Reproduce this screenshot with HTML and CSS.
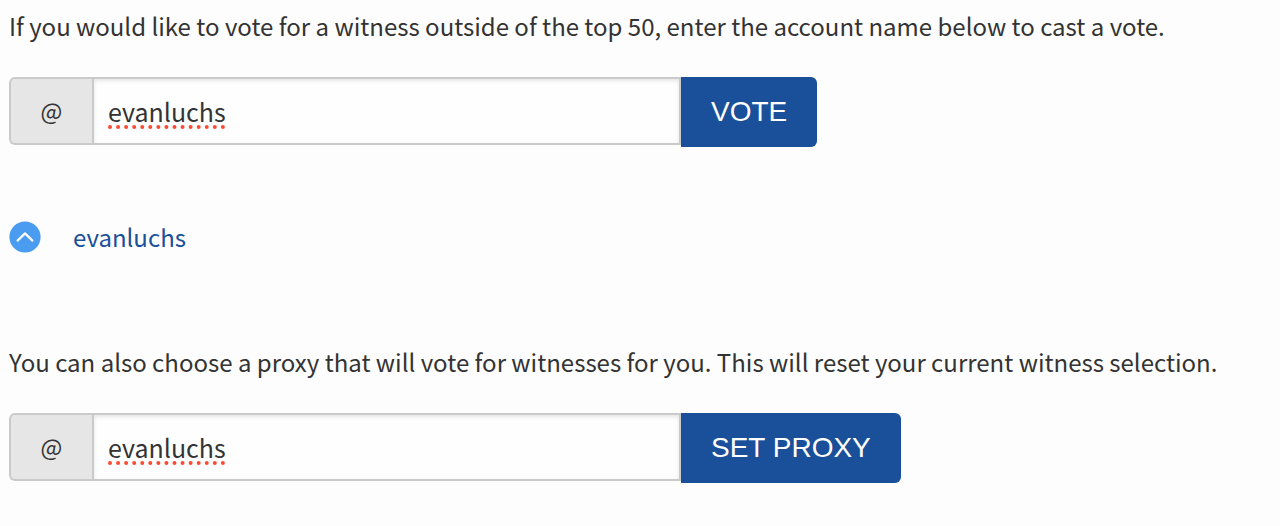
FILE: index.html
```html
<!DOCTYPE html>
<html lang="en">
<head>
    <meta charset="UTF-8">
    <meta name="viewport" content="width=device-width, initial-scale=1.0">
    <title>Witness Voting</title>
    <link rel="stylesheet" href="styles.css">
</head>
<body>
    <main class="witnesses">
        <section class="vote">
            <p id="vote-help">If you would like to vote for a witness outside of the top 50, enter the account name below to cast a vote.</p>
            <form class="input-group">
                <label class="input-group-label" for="witness">@</label>
                <input class="input-group-field" type="text" id="witness" value="evanluchs" aria-describedby="vote-help">
                <button class="button" type="button">VOTE</button>
            </form>
            <div class="voted">
                <button class="upvote" type="button" aria-label="Remove vote">
                    <svg viewBox="0 0 32 32" width="32" height="32">
                        <circle cx="16" cy="16" r="15.6" fill="#4a9cf0"/>
                        <path d="M8.6 19.6 L16 12.4 L23.4 19.6" fill="none" stroke="#fff" stroke-width="2.2" stroke-linecap="round" stroke-linejoin="round"/>
                    </svg>
                </button>
                <a href="#">evanluchs</a>
            </div>
        </section>
        <section class="proxy">
            <p id="proxy-help">You can also choose a proxy that will vote for witnesses for you. This will reset your current witness selection.</p>
            <form class="input-group">
                <label class="input-group-label" for="proxy">@</label>
                <input class="input-group-field" type="text" id="proxy" value="evanluchs" aria-describedby="proxy-help">
                <button class="button" type="button">SET PROXY</button>
            </form>
        </section>
    </main>
</body>
</html>
```

FILE: styles.css
```css
* {
    box-sizing: border-box;
}

body {
    margin: 0;
    background-color: #fdfdfd;
    color: #333;
    font-family: "Noto Sans CJK SC", "Open Sans", sans-serif;
    font-size: 24px;
    line-height: 36px;
}

.witnesses {
    padding: 8px 8px 32px 9px;
}

p {
    margin: 0 0 33px;
}

.input-group {
    display: flex;
    align-items: flex-start;
}

.input-group-label {
    display: flex;
    flex: none;
    align-items: center;
    justify-content: center;
    width: 83px;
    height: 68px;
    padding-bottom: 2px;
    border: 2px solid #cacaca;
    border-right: 0;
    border-radius: 6px 0 0 6px;
    background-color: #e6e6e6;
    font-size: 23px;
}

.input-group-field {
    flex: 0 1 589px;
    min-width: 0;
    height: 68px;
    padding: 0 14px;
    border: 2px solid #cacaca;
    border-radius: 0;
    background-color: #fefefe;
    box-shadow: inset 0 2px 4px rgba(10, 10, 10, 0.1);
    color: #333;
    font-family: inherit;
    font-size: 25px;
    text-decoration: underline dotted #fa4b32 4px;
    text-decoration-skip-ink: none;
    text-underline-offset: 3px;
}

.button {
    flex: none;
    height: 70px;
    padding: 0 30px;
    border: 0;
    border-radius: 0 6px 6px 0;
    background-color: #1a5099;
    color: #fff;
    font-family: "Liberation Sans", Arial, sans-serif;
    font-size: 28px;
    cursor: pointer;
}

.voted {
    display: flex;
    align-items: center;
    gap: 32px;
    margin: 72px 0 89px;
}

.upvote {
    width: 32px;
    height: 32px;
    padding: 0;
    border: 0;
    background: none;
    cursor: pointer;
}

.upvote svg {
    display: block;
}

a {
    color: #1a5099;
    text-decoration: none;
}
```
